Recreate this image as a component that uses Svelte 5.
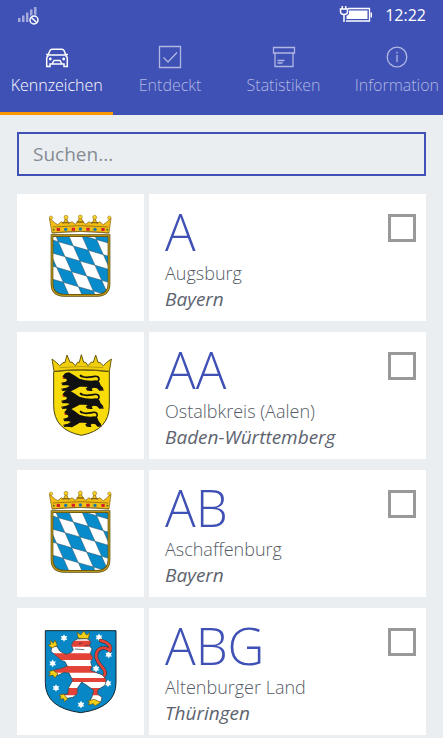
<script>
  const tabs = [
    { id: 'car', label: 'Kennzeichen' },
    { id: 'check', label: 'Entdeckt' },
    { id: 'box', label: 'Statistiken' },
    { id: 'info', label: 'Information' }
  ];
  const plates = [
    { code: 'A', district: 'Augsburg', state: 'Bayern', arms: 'by' },
    { code: 'AA', district: 'Ostalbkreis (Aalen)', state: 'Baden-Württemberg', arms: 'bw' },
    { code: 'AB', district: 'Aschaffenburg', state: 'Bayern', arms: 'by' },
    { code: 'ABG', district: 'Altenburger Land', state: 'Thüringen', arms: 'th' }
  ];
  let active = $state('car');
  let query = $state('');
  const shown = $derived(
    plates.filter((p) => `${p.code} ${p.district} ${p.state}`.toLowerCase().includes(query.toLowerCase()))
  );

  // Lozenges of the Bavarian shield: every other cell of a slanted grid.
  const lozenges = [];
  for (let i = -5; i <= 6; i++) {
    for (let j = -5; j <= 5; j++) {
      if ((i + j) % 2 !== 0) continue;
      const x = 75 + i * 45 + j * 20;
      const y = 155 + i * 13 + j * 45;
      lozenges.push(`${x},${y} ${x + 45},${y + 13} ${x + 65},${y + 58} ${x + 20},${y + 45}`);
    }
  }

  const stars = [[84, 48], [189, 46], [218, 98], [50, 124], [180, 140], [60, 198], [216, 184], [135, 248], [112, 146]];
  const star = (cx, cy) =>
    Array.from({ length: 12 }, (_, k) => {
      const r = k % 2 ? 6.5 : 11.5;
      const a = (k * Math.PI) / 6 - Math.PI / 2;
      return `${(cx + r * Math.cos(a)).toFixed(1)},${(cy + r * Math.sin(a)).toFixed(1)}`;
    }).join(' ');
</script>

<div class="app">
  <header>
    <div class="status">
      <svg class="signal" width="22" height="20" viewBox="0 0 22 20" aria-label="Kein Signal">
        <g fill="#a4abdc">
          <path d="M1 13h2.500v4H1zM5 10.500h2.500v6.500H5zM9 7.500h2.500V17H9zM13 4.500h2.500V17H13zM17 2h2.500v15H17z" />
        </g>
        <circle cx="17" cy="15" r="5.500" fill="#3f51b5" />
        <circle cx="17" cy="15" r="4" fill="none" stroke="#fff" stroke-width="1.500" />
        <path d="M14.200 12.200l5.600 5.600" stroke="#fff" stroke-width="1.500" />
      </svg>
      <svg class="battery" width="34" height="20" viewBox="0 0 34 20" aria-label="Akku lädt">
        <path d="M9 3.500H30.500v12.500H7" fill="none" stroke="#fff" stroke-width="1.300" />
        <path d="M10 5.500h18.500v8.500H7.500v-3L10 9z" fill="#fff" />
        <path d="M31.500 7.500h1.500v5H31.500z" fill="#fff" />
        <path d="M3.300 1v3M6.700 1v3M1.500 4h7v2.500c0 2-1.500 3-3.500 3s-3.500-1-3.500-3zM5 9.500V17" fill="none" stroke="#fff" stroke-width="1.500" />
      </svg>
      <time>12:22</time>
    </div>
    <nav>
      {#each tabs as tab (tab.id)}
        <button class="tab" class:active={active === tab.id} onclick={() => (active = tab.id)}>
          <svg width="24" height="24" viewBox="0 0 24 24" fill="none" stroke="currentColor" stroke-width="1.300" aria-hidden="true">
            {#if tab.id === 'car'}
              <g stroke-width="1.500">
                <path d="M2.500 11.500L5 5.500q.6-1.200 2-1.200h10q1.400 0 2 1.200l2.500 6M4 10h16M1 9.500h2M21 9.500h2M3.500 10.500Q1.700 11.500 1.700 13.500v8H5V19h14v2.500h3.300V13.500q0-2-1.800-3M7 19l2-3.500h6l2 3.500" />
              </g>
              <circle cx="5.300" cy="14" r="1.400" fill="currentColor" stroke="none" />
              <circle cx="18.700" cy="14" r="1.400" fill="currentColor" stroke="none" />
            {:else if tab.id === 'check'}
              <path d="M1.500 1.500h21v21h-21zM5.500 12.500l4.500 4.500 9-9.500" />
            {:else if tab.id === 'box'}
              <path d="M1.500 2.500h21v5.500h-21zM3 8h18v13.500H3zM5.500 15.500h7M5.500 18h5" />
            {:else}
              <circle cx="12" cy="12" r="9.800" />
              <path d="M12 10v7M12 6.800v1.600" />
            {/if}
          </svg>
          <span>{tab.label}</span>
        </button>
      {/each}
    </nav>
  </header>

  <main>
    <input class="search" type="search" placeholder="Suchen..." aria-label="Suchen" bind:value={query} />
    <ul>
      {#each shown as plate (plate.code)}
        <li>
          <div class="arms">
            {#if plate.arms === 'by'}
              <svg width="80" height="100" viewBox="3 0 240 300" aria-label="Wappen Bayern">
                <clipPath id="shield-{plate.code}">
                  <path d="M36 92H207V236Q207 270 172 271H72Q36 270 36 236z" />
                </clipPath>
                <path d="M36 92H207V236Q207 270 172 271H72Q36 270 36 236z" fill="#fff" />
                <g clip-path="url(#shield-{plate.code})" fill="#078bcb" stroke="#35505c" stroke-width="1.500">
                  {#each lozenges as points}<polygon {points} />{/each}
                </g>
                <path d="M36 92H207V236Q207 270 172 271H72Q36 270 36 236z" fill="none" stroke="#5c4a08" stroke-width="8" />
                <path d="M36 92H207V236Q207 270 172 271H72Q36 270 36 236z" fill="none" stroke="#b8961b" stroke-width="4" />
                <path d="M36 84L28 39 44 53 53 59 65 50 70 56 78 36 86 56 96 50 106 58 113 50 121 34 129 50 137 58 147 50 156 56 164 36 171 56 179 50 190 59 199 52 213 39 207 84Q120 74 36 84z" fill="#f2bd16" stroke="#755a0b" stroke-width="2" />
                <path d="M38 66Q120 58 205 66M36 84Q120 75 207 84" fill="none" stroke="#755a0b" stroke-width="2" />
                <g fill="#f9d22a" stroke="#8b6a0b" stroke-width="1.500">
                  <circle cx="33" cy="38" r="5" /><circle cx="78" cy="37" r="6" /><circle cx="121" cy="36" r="6" /><circle cx="164" cy="37" r="6" /><circle cx="208" cy="38" r="5" />
                  <path d="M67 53h22M110 51h22M153 53h22" stroke-width="4" />
                </g>
                <g fill="#d5222a"><path d="M50 69h10v9h-10zM95 68h10v9h-10zM139 68h10v9h-10zM184 69h10v9h-10z" /></g>
                <g fill="#1379b0"><circle cx="77" cy="73" r="5" /><circle cx="121" cy="72" r="5" /><circle cx="165" cy="73" r="5" /></g>
                <g fill="#536d2e"><circle cx="41" cy="74" r="3" /><circle cx="202" cy="74" r="3" /></g>
              </svg>
            {:else if plate.arms === 'bw'}
              <svg width="80" height="100" viewBox="0 -6 240 300" aria-label="Wappen Baden-Württemberg">
                <path d="M38 80Q120 70 205 80V181Q205 255 121 271Q38 255 38 181z" fill="#f8dc0a" stroke="#4b4308" stroke-width="3" />
                <path d="M39 79L33 42 47 53 56 62 66 53 72 52 78 30 87 52 93 51 103 62 110 52 115 52 121 29 128 52 134 52 141 62 151 51 157 52 164 30 171 52 177 53 187 62 196 53 211 42 205 79Q120 69 39 79z" fill="#f1cf0d" stroke="#685a0a" stroke-width="3" />
                <path d="M56 68Q120 61 187 68" fill="none" stroke="#9f8a0c" stroke-width="2" />
                {#each [0, 54, 108] as dy, k}
                  <g transform="translate({k === 2 ? 12 : 0} {dy}) scale({k === 2 ? 0.9 : 1} 1)">
                    <path d="M65 93L73 84 84 82 92 86 102 92 115 101 133 106 151 107 165 106 175 111 179 121 186 128 188 137 175 137 168 130 158 128 152 131 155 138 140 138 134 131 140 126 127 125 116 125 105 131 90 139 73 137 64 138 61 131 76 128 86 123 79 121 64 121 61 113 74 110 78 106 75 101 67 101z" fill="#111" />
                    <path d="M157 111C179 113 179 92 161 94C146 96 133 101 121 93" fill="none" stroke="#111" stroke-width="5" stroke-linecap="round" />
                    <path d="M120 88l-5 4 8 7z" fill="#111" />
                    <path d="M69 97l-5-2 2 7 5-2z" fill="#e12b1c" />
                    <path d="M61 116l5-2M60 133l6 1M138 136h7M180 136h7" stroke="#9b5412" stroke-width="2" />
                  </g>
                {/each}
              </svg>
            {:else}
              <svg width="80" height="100" viewBox="15 -9 240 300" aria-label="Wappen Thüringen">
                <path d="M28 26H240V182Q240 258 134 272Q28 258 28 182z" fill="#0787c5" stroke="#17272f" stroke-width="3" />
                <g fill="#fff">
                  {#each stars as [x, y]}<polygon points={star(x, y)} />{/each}
                </g>
                <path d="M163 166Q190 183 204 162C220 140 175 128 181 97C184 80 202 70 222 85C228 73 215 60 194 56" fill="none" stroke="#26353e" stroke-width="11" stroke-linecap="round" />
                <path d="M163 166Q190 183 204 162C220 140 175 128 181 97C184 80 202 70 222 85C228 73 215 60 194 56" fill="none" stroke="#e34237" stroke-width="8" stroke-linecap="round" />
                <clipPath id="lion">
                  <path d="M124 51L153 50 164 58 161 73 168 80 163 94 171 107 164 119 168 133 163 145 178 151 198 158 211 173 207 190 186 203 184 216 198 226 195 239 177 241 161 237 168 225 173 205 151 189 137 180 124 199 124 215 111 226 80 231 77 217 95 216 98 197 110 175 99 153 84 151 66 160 46 153 55 144 76 139 94 132 87 119 76 115 60 101 45 88 48 72 62 73 72 88 90 97 105 92 112 83 106 70 112 58z" />
                </clipPath>
                <g clip-path="url(#lion)">
                  <path d="M35 45h185v205H35z" fill="#fff" />
                  <path d="M35 56h185v18H35zM35 94h185v20H35zM35 132h185v20H35zM35 168h185v12H35zM35 198h185v22H35z" fill="#e34237" />
                </g>
                <path d="M124 51L153 50 164 58 161 73 168 80 163 94 171 107 164 119 168 133 163 145 178 151 198 158 211 173 207 190 186 203 184 216 198 226 195 239 177 241 161 237 168 225 173 205 151 189 137 180 124 199 124 215 111 226 80 231 77 217 95 216 98 197 110 175 99 153 84 151 66 160 46 153 55 144 76 139 94 132 87 119 76 115 60 101 45 88 48 72 62 73 72 88 90 97 105 92 112 83 106 70 112 58z" fill="none" stroke="#26353e" stroke-width="2" />
                <path d="M127 49l-4-18 11 8 9-12 9 12 9-7-4 18zM48 78l-12-9 8-2-2-12 10 9 5-10 7 16zM52 145l-14 4 5 4-5 9 13-3 5 9 10-12zM83 216l-14 4 6 4-4 7 12-1 2 9 10-8zM175 232l-21 5 6 3-3 9 15-4 5 7 17-11z" fill="#f2ce17" stroke="#5b5519" stroke-width="2" />
                <path d="M128 65l10-2M146 72l12-2M117 81l28 2" stroke="#26353e" stroke-width="2" />
              </svg>
            {/if}
          </div>
          <label class="info">
            <span class="text">
              <strong>{plate.code}</strong>
              <span>{plate.district}</span>
              <em>{plate.state}</em>
            </span>
            <input type="checkbox" />
          </label>
        </li>
      {/each}
    </ul>
  </main>
</div>

<style>
  :global(body) {
    margin: 0;
    background: #eaeef1;
  }
  .app {
    min-height: 100vh;
    overflow: hidden;
    font-family: 'Open Sans', 'Noto Sans', sans-serif;
    font-weight: 300;
    color: #555b66;
  }
  header {
    background: #3f51b5;
    color: #fff;
  }
  .status {
    display: flex;
    align-items: center;
    height: 30px;
    padding: 0 17px;
  }
  .battery {
    margin-left: auto;
  }
  time {
    margin-left: 12px;
    font-size: 16px;
    font-weight: 400;
    line-height: 30px;
  }
  nav {
    display: flex;
    overflow: hidden;
  }
  .tab {
    box-sizing: border-box;
    flex: 0 0 25.6%;
    display: flex;
    flex-direction: column;
    align-items: center;
    gap: 4px;
    height: 85px;
    padding: 15px 0 0;
    border: 0;
    border-bottom: 3px solid transparent;
    background: none;
    color: #b0b7e2;
    font: inherit;
    font-size: 16px;
    line-height: 24px;
    cursor: pointer;
  }
  .tab.active {
    border-color: #ff9800;
    color: #fff;
  }
  main {
    padding: 17px 17px 0;
  }
  .search {
    box-sizing: border-box;
    display: block;
    width: 100%;
    height: 44px;
    padding: 0 14px;
    border: 2px solid #3f51b5;
    border-radius: 0;
    outline: 0;
    appearance: none;
    background: transparent;
    color: #5d636e;
    font: inherit;
    font-size: 19px;
    font-weight: 400;
  }
  .search::placeholder {
    color: #858b94;
    opacity: 1;
  }
  ul {
    display: grid;
    gap: 11px;
    margin: 18px 0 0;
    padding: 0;
    list-style: none;
  }
  li {
    display: grid;
    grid-template-columns: 127px 1fr;
    gap: 5px;
    min-height: 127px;
  }
  .arms,
  .info {
    background: #fff;
  }
  .arms {
    display: flex;
    justify-content: center;
    padding-top: 11px;
  }
  .info {
    display: flex;
    justify-content: space-between;
    padding: 11px 10px 8px 16px;
  }
  .text {
    display: flex;
    flex-direction: column;
    font-size: 18px;
    line-height: 26px;
  }
  strong {
    margin-bottom: 3px;
    color: #3f51b5;
    font-size: 51px;
    font-weight: 300;
    line-height: 52px;
  }
  em {
    color: #5d636e;
    font-size: 19px;
    font-weight: 400;
  }
  .info input {
    flex: none;
    width: 28px;
    height: 28px;
    margin: 9px 0 0;
    border: 3px solid #999;
    border-radius: 0;
    appearance: none;
    background: #fff;
  }
  .info input:checked {
    background: #3f51b5;
    box-shadow: inset 0 0 0 3px #fff;
  }
</style>
